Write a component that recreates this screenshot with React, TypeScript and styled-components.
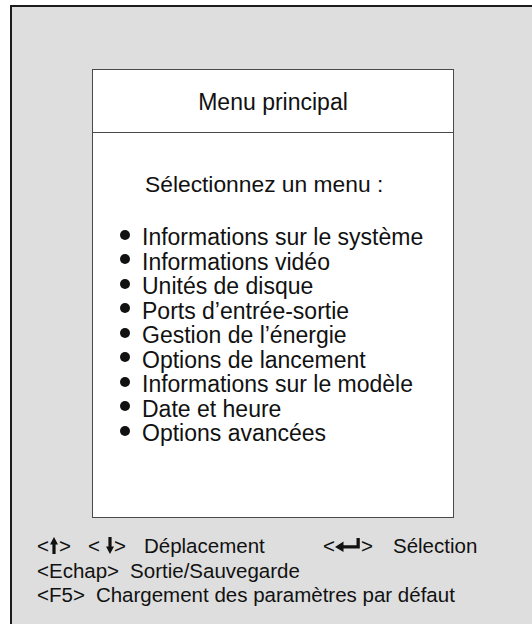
import React from 'react';
import styled, { createGlobalStyle } from 'styled-components';

const items = [
    'Informations sur le système',
    'Informations vidéo',
    'Unités de disque',
    'Ports d’entrée-sortie',
    'Gestion de l’énergie',
    'Options de lancement',
    'Informations sur le modèle',
    'Date et heure',
    'Options avancées',
];

const UpArrow = () => (
    <ArrowSvg width="8" height="17" viewBox="0 0 8 17" $left={1} $right={1}>
        <path d="M4 0 L8 7.5 L5.6 7.5 L5.6 17 L2.4 17 L2.4 7.5 L0 7.5 Z" fill="#111" />
    </ArrowSvg>
);

const DownArrow = () => (
    <ArrowSvg width="8" height="17" viewBox="0 0 8 17" $left={6} $right={0}>
        <path d="M2.4 0 L5.6 0 L5.6 9.5 L8 9.5 L4 17 L0 9.5 L2.4 9.5 Z" fill="#111" />
    </ArrowSvg>
);

const EnterArrow = () => (
    <ArrowSvg width="25" height="14" viewBox="0 0 25 14" $left={0} $right={1}>
        <path d="M0 9 L8.5 3.5 L8.5 7.3 L21.5 7.3 L21.5 0 L24.8 0 L24.8 10.6 L8.5 10.6 L8.5 14 Z" fill="#111" />
    </ArrowSvg>
);

function App() {
    return (
        <>
            <GlobalStyle />
            <Screen>
                <MenuBox>
                    <MenuHeader>Menu principal</MenuHeader>
                    <MenuBody>
                        <Prompt>Sélectionnez un menu :</Prompt>
                        <ItemList>
                            {items.map((item) => (
                                <Item key={item}>{item}</Item>
                            ))}
                        </ItemList>
                    </MenuBody>
                </MenuBox>
                <Footer>
                    <KeyRow>
                        <KeyGroup $width={286}>
                            <Key $gap={17}>&lt;<UpArrow />&gt;</Key>
                            <Key $gap={18}>&lt;<DownArrow />&gt;</Key>
                            <KeyLabel>Déplacement</KeyLabel>
                        </KeyGroup>
                        <KeyGroup>
                            <Key $gap={20}>&lt;<EnterArrow />&gt;</Key>
                            <KeyLabel>Sélection</KeyLabel>
                        </KeyGroup>
                    </KeyRow>
                    <KeyRow>
                        <Key $gap={11}>&lt;Echap&gt;</Key>
                        <KeyLabel>Sortie/Sauvegarde</KeyLabel>
                    </KeyRow>
                    <KeyRow>
                        <Key $gap={11}>&lt;F5&gt;</Key>
                        <KeyLabel>Chargement des paramètres par défaut</KeyLabel>
                    </KeyRow>
                </Footer>
            </Screen>
        </>
    );
}

export default App;

const colors = {
    screen: "#dedede",
    frame: "#1c1c1c",
    box: "#4a4a4a",
    text: "#111111",
};

const GlobalStyle = createGlobalStyle`
    html, body {
        margin: 0;
        padding: 0;
        background: #ffffff;
    }
    body {
        font-family: "Liberation Sans", Arial, sans-serif;
        color: ${colors.text};
    }
`;

const Screen = styled.div`
    box-sizing: border-box;
    margin: 5px 0 0 10px;
    height: 619px;
    background: ${colors.screen};
    border-left: 2px solid ${colors.frame};
    border-top: 2px solid ${colors.frame};
    padding: 62px 0 0 80px;
    display: flex;
    flex-direction: column;
`;

const MenuBox = styled.div`
    box-sizing: border-box;
    width: 362px;
    height: 449px;
    background: #ffffff;
    border: 1.5px solid ${colors.box};
    display: flex;
    flex-direction: column;
`;

const MenuHeader = styled.div`
    height: 63px;
    display: flex;
    align-items: center;
    justify-content: center;
    font-size: 23px;
    border-bottom: 1.5px solid ${colors.box};
    padding-top: 2px;
    box-sizing: border-box;
`;

const MenuBody = styled.div`
    display: flex;
    flex-direction: column;
    padding: 38px 0 0 52px;
`;

const Prompt = styled.div`
    font-size: 22.8px;
    line-height: 26px;
    margin-bottom: 28px;
`;

const ItemList = styled.ul`
    list-style: none;
    margin: 0 0 0 -25px;
    padding: 0;
`;

const Item = styled.li`
    display: flex;
    align-items: center;
    font-size: 23px;
    line-height: 24.5px;
    white-space: nowrap;

    &::before {
        content: "";
        flex-shrink: 0;
        width: 10px;
        height: 10px;
        border-radius: 50%;
        background: ${colors.text};
        margin-right: 12px;
        margin-top: -5px;
    }
`;

const Footer = styled.div`
    display: flex;
    flex-direction: column;
    padding: 16px 0 0 0;
    margin-left: -55px;
`;

const KeyRow = styled.div`
    display: flex;
    align-items: center;
    font-size: 20.5px;
    line-height: 24.5px;
    white-space: pre;
`;

const KeyGroup = styled.div<{ $width?: number }>`
    display: flex;
    align-items: center;
    width: ${(props) => (props.$width ? `${props.$width}px` : 'auto')};
`;

const Key = styled.span<{ $gap: number }>`
    display: inline-flex;
    align-items: center;
    margin-right: ${(props) => props.$gap}px;
`;

const KeyLabel = styled.span``;

const ArrowSvg = styled.svg<{ $left: number; $right: number }>`
    display: inline-block;
    flex-shrink: 0;
    margin: -2px ${(props) => props.$right}px 0 ${(props) => props.$left}px;
`;
